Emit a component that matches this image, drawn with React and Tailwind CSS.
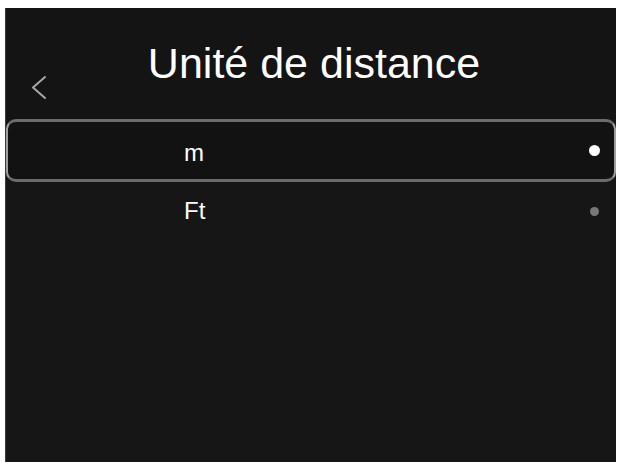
import React from 'react';

const options = [
  { label: 'm', selected: true },
  { label: 'Ft', selected: false },
];

function BackChevron() {
  return (
    <svg width="18" height="28" viewBox="0 0 18 28" fill="none" stroke="#a8a8a8" strokeWidth="2" strokeLinecap="round" strokeLinejoin="round">
      <path d="M15 3 L3 13.5 L15 24" />
    </svg>
  );
}

export default function App() {
  return (
    <div className="w-[620px] h-[464px] bg-white pt-[8px] pl-[5px] overflow-hidden" style={{ fontFamily: '"Liberation Sans", Arial, sans-serif' }}>
      <div className="w-[611px] h-[454px] bg-[#161616] border-l border-[#3a3a3a] flex flex-col">
        {/* header */}
        <div className="h-[111px] bg-[#141414] flex items-start">
          <div className="w-[60px] pl-[24px] pt-[66px]">
            <BackChevron />
          </div>
          <div className="flex-1 pt-[34px] text-center text-white text-[43px] leading-[43px]">
            Unité de distance
          </div>
          <div className="w-[54px]" />
        </div>

        {/* options */}
        <div className="flex flex-col">
          {options.map((o) =>
            o.selected ? (
              <div
                key={o.label}
                className="h-[63px] flex items-center rounded-[10px] border-y-[3px] border-x-2 border-y-[#6c6c6c] border-x-[#a0a0a0] bg-[#121212]"
              >
                <span className="pl-[176px] flex-1 text-white text-[24px] leading-none pt-[4px]">{o.label}</span>
                <span className="w-[11px] h-[11px] rounded-full bg-white mr-[14px]" />
              </div>
            ) : (
              <div key={o.label} className="h-[58px] flex items-center">
                <span className="pl-[178px] flex-1 text-white text-[24px] leading-none">{o.label}</span>
                <span className="w-[9px] h-[9px] rounded-full bg-[#787878] mr-[17px]" />
              </div>
            )
          )}
        </div>
      </div>
    </div>
  );
}
